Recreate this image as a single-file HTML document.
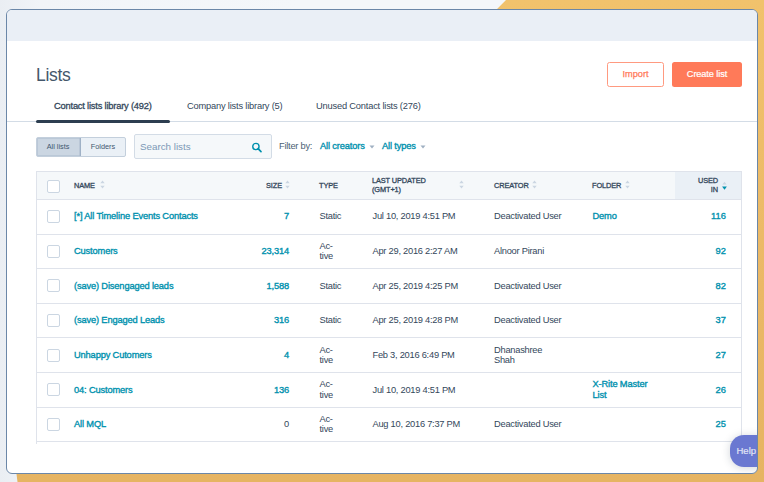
<!DOCTYPE html>
<html><head><meta charset="utf-8">
<style>
*{box-sizing:border-box;margin:0;padding:0}
html,body{width:764px;height:482px;overflow:hidden}
body{position:relative;font-family:"Liberation Sans",sans-serif;color:#33475b;
 background:linear-gradient(90deg,#eaeef3 0px,#f1f4f8 40px,#f4f7fa 300px,#f4f7fa 764px);}
.orange{position:absolute;left:0;top:0;width:764px;height:482px;
 background:linear-gradient(180deg,#f1c26c 0%,#ebb866 60%,#e6b462 100%);
 clip-path:polygon(506px 0,764px 0,764px 482px,17.5px 482px,16px 470px,497px 9px);}
.win{position:absolute;left:6px;top:9px;width:752px;height:465px;border:1px solid #6b87a8;border-radius:6px;background:#fff;overflow:hidden}
.topbar{position:absolute;left:0;top:0;width:100%;height:31px;background:#eaeff6}
.abs{position:absolute;white-space:nowrap}
.t{font-size:9.3px;letter-spacing:-0.25px;line-height:10px}
.link{color:#0091ae;letter-spacing:-0.15px;-webkit-text-stroke:0.35px #0091ae}
.hd{font-size:7.4px;letter-spacing:-0.12px;line-height:9px;color:#33475b;-webkit-text-stroke:0.3px #33475b}
.cb{position:absolute;width:13px;height:13px;border:1.5px solid #cbd6e2;border-radius:2px;background:#fff}
.sort{position:absolute}
</style></head><body>
<div class="orange"></div>
<div class="win">
<div class="topbar"></div>
<div class="abs" style="left:29px;top:55px;font-size:17.5px;line-height:20px;letter-spacing:-0.3px;color:#44576b">Lists</div>
<div class="abs" style="left:600px;top:52px;width:57px;height:25px;border:1px solid #ff9a80;border-radius:2.5px;color:#ff7a59;font-size:9.2px;line-height:23px;text-align:center;-webkit-text-stroke:0.25px #ff7a59">Import</div>
<div class="abs" style="left:665px;top:52px;width:70px;height:25px;background:#ff7a59;border-radius:2.5px;color:#fff;font-size:9.2px;line-height:25px;text-align:center;letter-spacing:-0.1px;-webkit-text-stroke:0.2px #fff">Create list</div>
<div class="abs t" style="left:47px;top:90.5px;letter-spacing:-0.19px;-webkit-text-stroke:0.3px #33475b">Contact lists library (492)</div>
<div class="abs t" style="left:180px;top:90.5px;letter-spacing:-0.19px;-webkit-text-stroke:0px #33475b">Company lists library (5)</div>
<div class="abs t" style="left:309px;top:90.5px;letter-spacing:-0.19px;-webkit-text-stroke:0px #33475b">Unused Contact lists (276)</div>
<div class="abs" style="left:0px;top:111px;width:752px;height:1px;background:#d3dce6"></div>
<div class="abs" style="left:29px;top:110px;width:134px;height:3px;background:#2d3e50;border-radius:2px"></div>
<div class="abs" style="left:29px;top:127px;width:90px;height:20px;border:1px solid #c3cfdc;border-radius:2px;background:#eaf0f6;overflow:hidden"><div style="position:absolute;left:0;top:0;width:44px;height:18px;background:#cbd6e2;border-right:1px solid #9fb1c6;box-shadow:inset 0 0 0 0.5px #a9b9cc"></div><div style="position:absolute;left:-1px;top:0;width:44px;height:18px;font-size:7.3px;line-height:18px;text-align:center;color:#3f5870">All lists</div><div style="position:absolute;left:44px;top:0;width:44px;height:18px;font-size:7.3px;line-height:18px;text-align:center;color:#3f5870">Folders</div></div>
<div class="abs" style="left:127px;top:124px;width:138px;height:25px;border:1px solid #d3dce6;border-radius:2px;background:#f5f8fa"></div>
<div class="abs" style="left:133px;top:131px;font-size:9.8px;line-height:11px;color:#7c98b6">Search lists</div>
<svg class="abs" style="left:244px;top:132px" width="12" height="12" viewBox="0 0 12 12"><circle cx="4.9" cy="4.5" r="3.15" fill="none" stroke="#0091ae" stroke-width="1.4"/><line x1="7.1" y1="6.7" x2="10" y2="9.6" stroke="#0091ae" stroke-width="1.7" stroke-linecap="round"/></svg>
<div class="abs t" style="left:272px;top:131px;color:#4b5f74">Filter by:</div>
<div class="abs t link" style="left:313px;top:131px">All creators</div>
<svg class="abs" style="left:362px;top:135px" width="6" height="4"><path d="M0.5 0.5h5l-2.5 3z" fill="#9fb0c2"/></svg>
<div class="abs t link" style="left:375px;top:131px">All types</div>
<svg class="abs" style="left:413px;top:135px" width="6" height="4"><path d="M0.5 0.5h5l-2.5 3z" fill="#9fb0c2"/></svg>
<div class="abs" style="left:29px;top:161px;width:706px;height:273px;border-left:1px solid #dfe3eb;border-right:1px solid #dfe3eb;border-top:1px solid #dfe3eb"></div>
<div class="abs" style="left:30px;top:162px;width:704px;height:28px;background:#f5f8fa;border-bottom:1px solid #dfe3eb"></div>
<div class="abs" style="left:668px;top:162px;width:66px;height:28px;background:#eaf0f6;border-bottom:1px solid #dfe3eb"></div>
<div class="cb" style="left:40px;top:170px"></div>
<div class="abs hd" style="left:67px;top:171px">NAME</div>
<svg class="abs" style="left:92.5px;top:170px" width="5" height="9" viewBox="0 0 5 9"><path d="M0.3 3.2L2.5 0.6L4.7 3.2z M0.3 5.8L2.5 8.4L4.7 5.8z" fill="#cbd6e2"/></svg>
<div class="abs hd" style="left:259px;top:171px">SIZE</div>
<svg class="abs" style="left:278px;top:170px" width="5" height="9" viewBox="0 0 5 9"><path d="M0.3 3.2L2.5 0.6L4.7 3.2z M0.3 5.8L2.5 8.4L4.7 5.8z" fill="#cbd6e2"/></svg>
<div class="abs hd" style="left:312px;top:171px">TYPE</div>
<div class="abs hd" style="left:365px;top:166px">LAST UPDATED<br>(GMT+1)</div>
<svg class="abs" style="left:452px;top:170px" width="5" height="9" viewBox="0 0 5 9"><path d="M0.3 3.2L2.5 0.6L4.7 3.2z M0.3 5.8L2.5 8.4L4.7 5.8z" fill="#cbd6e2"/></svg>
<div class="abs hd" style="left:487px;top:171px">CREATOR</div>
<svg class="abs" style="left:524.5px;top:170px" width="5" height="9" viewBox="0 0 5 9"><path d="M0.3 3.2L2.5 0.6L4.7 3.2z M0.3 5.8L2.5 8.4L4.7 5.8z" fill="#cbd6e2"/></svg>
<div class="abs hd" style="left:585px;top:171px">FOLDER</div>
<svg class="abs" style="left:618px;top:170px" width="5" height="9" viewBox="0 0 5 9"><path d="M0.3 3.2L2.5 0.6L4.7 3.2z M0.3 5.8L2.5 8.4L4.7 5.8z" fill="#cbd6e2"/></svg>
<div class="abs hd" style="left:683px;top:166px;width:28px;text-align:right">USED<br>IN</div>
<svg class="abs" style="left:715px;top:171px" width="5" height="9" viewBox="0 0 5 9"><path d="M0.4 3.4L2.5 0.8L4.6 3.4z" fill="#cbd6e2"/><path d="M0.1 5.6L2.5 8.8L4.9 5.6z" fill="#0091ae"/></svg>
<div class="abs" style="left:30px;top:224px;width:704px;height:1px;background:#dfe3eb"></div>
<div class="cb" style="left:40px;top:200px"></div>
<div class="abs t link" style="left:67px;top:201.33px;line-height:10px;">[*] All Timeline Events Contacts</div>
<div class="abs t link" style="left:212px;top:201.33px;width:70px;text-align:right">7</div>
<div class="abs t " style="left:312.5px;top:201.33px;line-height:10px;">Static</div>
<div class="abs t " style="left:365.5px;top:201.33px;line-height:10px;">Jul 10, 2019 4:51 PM</div>
<div class="abs t " style="left:487px;top:201.33px;line-height:10px;">Deactivated User</div>
<div class="abs t link" style="left:585.5px;top:201.33px;line-height:10px;">Demo</div>
<div class="abs t link" style="left:669px;top:201.33px;width:50px;text-align:right;letter-spacing:0.1px">116</div>
<div class="abs" style="left:30px;top:258px;width:704px;height:1px;background:#dfe3eb"></div>
<div class="cb" style="left:40px;top:235px"></div>
<div class="abs t link" style="left:67px;top:236.00px;line-height:10px;">Customers</div>
<div class="abs t link" style="left:212px;top:236.00px;width:70px;text-align:right">23,314</div>
<div class="abs t " style="left:312.5px;top:230.60px;line-height:10.4px;">Ac-<br>tive</div>
<div class="abs t " style="left:365.5px;top:236.00px;line-height:10px;">Apr 29, 2016 2:27 AM</div>
<div class="abs t " style="left:487px;top:236.00px;line-height:10px;">Alnoor Pirani</div>
<div class="abs t link" style="left:669px;top:236.00px;width:50px;text-align:right;letter-spacing:0.1px">92</div>
<div class="abs" style="left:30px;top:293px;width:704px;height:1px;background:#dfe3eb"></div>
<div class="cb" style="left:40px;top:269px"></div>
<div class="abs t link" style="left:67px;top:270.67px;line-height:10px;">(save) Disengaged leads</div>
<div class="abs t link" style="left:212px;top:270.67px;width:70px;text-align:right">1,588</div>
<div class="abs t " style="left:312.5px;top:270.67px;line-height:10px;">Static</div>
<div class="abs t " style="left:365.5px;top:270.67px;line-height:10px;">Apr 25, 2019 4:25 PM</div>
<div class="abs t " style="left:487px;top:270.67px;line-height:10px;">Deactivated User</div>
<div class="abs t link" style="left:669px;top:270.67px;width:50px;text-align:right;letter-spacing:0.1px">82</div>
<div class="abs" style="left:30px;top:327px;width:704px;height:1px;background:#dfe3eb"></div>
<div class="cb" style="left:40px;top:304px"></div>
<div class="abs t link" style="left:67px;top:305.33px;line-height:10px;">(save) Engaged Leads</div>
<div class="abs t link" style="left:212px;top:305.33px;width:70px;text-align:right">316</div>
<div class="abs t " style="left:312.5px;top:305.33px;line-height:10px;">Static</div>
<div class="abs t " style="left:365.5px;top:305.33px;line-height:10px;">Apr 25, 2019 4:28 PM</div>
<div class="abs t " style="left:487px;top:305.33px;line-height:10px;">Deactivated User</div>
<div class="abs t link" style="left:669px;top:305.33px;width:50px;text-align:right;letter-spacing:0.1px">37</div>
<div class="abs" style="left:30px;top:362px;width:704px;height:1px;background:#dfe3eb"></div>
<div class="cb" style="left:40px;top:339px"></div>
<div class="abs t link" style="left:67px;top:340.00px;line-height:10px;">Unhappy Cutomers</div>
<div class="abs t link" style="left:212px;top:340.00px;width:70px;text-align:right">4</div>
<div class="abs t " style="left:312.5px;top:334.60px;line-height:10.4px;">Ac-<br>tive</div>
<div class="abs t " style="left:365.5px;top:340.00px;line-height:10px;">Feb 3, 2016 6:49 PM</div>
<div class="abs t " style="left:487px;top:334.60px;line-height:10.4px;">Dhanashree<br>Shah</div>
<div class="abs t link" style="left:669px;top:340.00px;width:50px;text-align:right;letter-spacing:0.1px">27</div>
<div class="abs" style="left:30px;top:397px;width:704px;height:1px;background:#dfe3eb"></div>
<div class="cb" style="left:40px;top:373px"></div>
<div class="abs t link" style="left:67px;top:374.67px;line-height:10px;">04: Customers</div>
<div class="abs t link" style="left:212px;top:374.67px;width:70px;text-align:right">136</div>
<div class="abs t " style="left:312.5px;top:369.27px;line-height:10.4px;">Ac-<br>tive</div>
<div class="abs t " style="left:365.5px;top:374.67px;line-height:10px;">Jul 10, 2019 4:51 PM</div>
<div class="abs t link" style="left:585.5px;top:369.27px;line-height:10.4px;">X-Rite Master<br>List</div>
<div class="abs t link" style="left:669px;top:374.67px;width:50px;text-align:right;letter-spacing:0.1px">26</div>
<div class="abs" style="left:30px;top:431px;width:704px;height:1px;background:#dfe3eb"></div>
<div class="cb" style="left:40px;top:408px"></div>
<div class="abs t link" style="left:67px;top:409.34px;line-height:10px;">All MQL</div>
<div class="abs t " style="left:212px;top:409.34px;width:70px;text-align:right">0</div>
<div class="abs t " style="left:312.5px;top:403.94px;line-height:10.4px;">Ac-<br>tive</div>
<div class="abs t " style="left:365.5px;top:409.34px;line-height:10px;">Aug 10, 2016 7:37 PM</div>
<div class="abs t " style="left:487px;top:409.34px;line-height:10px;">Deactivated User</div>
<div class="abs t link" style="left:669px;top:409.34px;width:50px;text-align:right;letter-spacing:0.1px">25</div>
<div class="abs" style="left:723px;top:425px;width:40px;height:32px;border-radius:14px;background:#6a78d1;box-shadow:0 1px 9px rgba(45,62,80,0.22);color:#e4e7f6;font-size:9.5px;line-height:32px;padding-left:6.5px;-webkit-text-stroke:0.15px #e4e7f6">Help</div>
</div>
</body></html>
